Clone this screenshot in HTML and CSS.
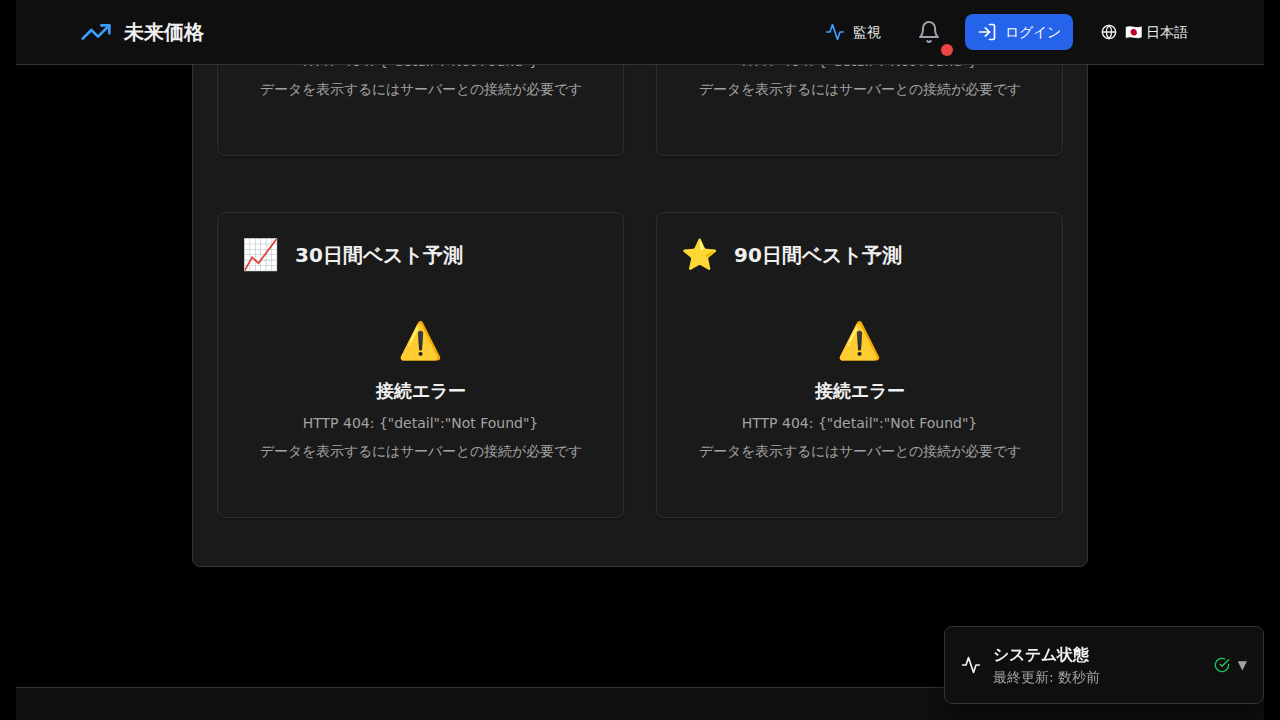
FILE: index.html
```html
<!DOCTYPE html>
<html lang="ja">
<head>
<meta charset="utf-8">
<meta name="viewport" content="width=device-width, initial-scale=1">
<title>未来価格</title>
<link rel="stylesheet" href="styles.css">
</head>
<body>
<header class="site-header">
  <div class="brand">
    <svg class="icon icon-xl accent" viewBox="0 0 24 24" aria-hidden="true"><path d="M22 7l-8.5 8.5-5-5L2 17"/><path d="M16 7h6v6"/></svg>
    <h1 class="brand-name">未来価格</h1>
  </div>
  <nav class="nav">
    <button class="nav-button" type="button">
      <svg class="icon icon-md accent" viewBox="0 0 24 24" aria-hidden="true"><path d="M22 12h-4l-3 9L9 3l-3 9H2"/></svg>
      <span>監視</span>
    </button>
    <button class="bell-button" type="button" aria-label="通知">
      <svg class="icon icon-lg" viewBox="0 0 24 24" aria-hidden="true"><path d="M6 8a6 6 0 0 1 12 0c0 7 3 9 3 9H3s3-2 3-9"/><path d="M10.3 21a1.94 1.94 0 0 0 3.4 0"/></svg>
      <span class="bell-dot"></span>
    </button>
    <button class="nav-button login" type="button">
      <svg class="icon icon-md" viewBox="0 0 24 24" aria-hidden="true"><path d="M15 3h4a2 2 0 0 1 2 2v14a2 2 0 0 1-2 2h-4"/><path d="M10 17l5-5-5-5"/><path d="M15 12H3"/></svg>
      <span>ログイン</span>
    </button>
    <button class="nav-button" type="button">
      <svg class="icon icon-sm" viewBox="0 0 24 24" aria-hidden="true"><circle cx="12" cy="12" r="10"/><path d="M12 2a14.5 14.5 0 0 0 0 20 14.5 14.5 0 0 0 0-20"/><path d="M2 12h20"/></svg>
      <span>🇯🇵 日本語</span>
    </button>
  </nav>
</header>

<main class="content">
  <section class="panel">
    <div class="card-grid">
      <article class="card">
        <div class="error">
          <p class="error-text">HTTP 404: {"detail":"Not Found"}</p>
          <p class="error-text">データを表示するにはサーバーとの接続が必要です</p>
        </div>
      </article>
      <article class="card">
        <div class="error">
          <p class="error-text">HTTP 404: {"detail":"Not Found"}</p>
          <p class="error-text">データを表示するにはサーバーとの接続が必要です</p>
        </div>
      </article>
      <article class="card">
        <div class="card-header"><span class="card-emoji">📈</span><h2 class="card-title">30日間ベスト予測</h2></div>
        <div class="error">
          <div class="error-emoji">⚠️</div>
          <h3 class="error-title">接続エラー</h3>
          <p class="error-text">HTTP 404: {"detail":"Not Found"}</p>
          <p class="error-text">データを表示するにはサーバーとの接続が必要です</p>
        </div>
      </article>
      <article class="card">
        <div class="card-header"><span class="card-emoji">⭐</span><h2 class="card-title">90日間ベスト予測</h2></div>
        <div class="error">
          <div class="error-emoji">⚠️</div>
          <h3 class="error-title">接続エラー</h3>
          <p class="error-text">HTTP 404: {"detail":"Not Found"}</p>
          <p class="error-text">データを表示するにはサーバーとの接続が必要です</p>
        </div>
      </article>
    </div>
  </section>
</main>

<footer class="site-footer"></footer>

<button class="status" type="button">
  <svg class="icon icon-md" viewBox="0 0 24 24" aria-hidden="true"><path d="M22 12h-4l-3 9L9 3l-3 9H2"/></svg>
  <span class="status-body">
    <span class="status-title">システム状態</span>
    <span class="status-time">最終更新: 数秒前</span>
  </span>
  <svg class="icon icon-sm ok" viewBox="0 0 24 24" aria-hidden="true"><path d="M22 11.08V12a10 10 0 1 1-5.93-9.14"/><path d="M9 11l3 3L22 4"/></svg>
  <span class="status-arrow">▼</span>
</button>
</body>
</html>
```
FILE: styles.css
```css
* {
  box-sizing: border-box;
  margin: 0;
}

body {
  display: flex;
  flex-direction: column;
  height: 100vh;
  padding: 0 16px;
  overflow: hidden;
  background: #000;
  color: #f0f0f0;
  font-family: "DejaVu Sans", sans-serif;
  font-size: 14px;
  line-height: 20px;
}

button {
  border: 0;
  background: none;
  color: inherit;
  font: inherit;
  cursor: pointer;
}

.icon {
  flex: none;
  display: block;
  fill: none;
  stroke: currentColor;
  stroke-width: 2;
  stroke-linecap: round;
  stroke-linejoin: round;
}

.icon-sm { width: 16px; height: 16px; }
.icon-md { width: 20px; height: 20px; }
.icon-lg { width: 24px; height: 24px; }
.icon-xl { width: 32px; height: 32px; }
.accent { color: #3b9eff; }
.ok { color: #22c55e; }

.site-header {
  flex: none;
  display: flex;
  align-items: center;
  justify-content: space-between;
  height: 65px;
  padding: 0 64px;
  background: #0f0f0f;
  border-bottom: 1px solid #333;
}

.brand {
  display: flex;
  align-items: center;
  gap: 12px;
}

.brand-name {
  font-size: 20px;
  line-height: 28px;
}

.nav {
  display: flex;
  align-items: center;
  gap: 16px;
}

.nav-button {
  display: flex;
  align-items: center;
  gap: 8px;
  padding: 8px 12px;
  border-radius: 8px;
}

.login {
  background: #2563eb;
  color: #fff;
}

.bell-button {
  position: relative;
  padding: 8px;
  color: #9ca3af;
}

.bell-dot {
  position: absolute;
  right: -4px;
  bottom: -4px;
  width: 12px;
  height: 12px;
  border-radius: 50%;
  background: #ef4444;
}

.content {
  flex: 1;
  min-height: 0;
  display: flex;
  flex-direction: column;
  align-items: center;
  justify-content: flex-end;
  padding-bottom: 120px;
  overflow: hidden;
}

.panel {
  flex: none;
  width: 100%;
  max-width: 896px;
  padding: 24px;
  background: #1a1a1a;
  border: 1px solid #333;
  border-radius: 8px;
}

.card-grid {
  display: grid;
  grid-template-columns: 1fr 1fr;
  grid-auto-rows: 1fr;
  gap: 32px;
}

.card {
  display: flex;
  flex-direction: column;
  justify-content: flex-end;
  margin-bottom: 24px;
  padding: 24px;
  border: 1px solid #2e2e2e;
  border-radius: 8px;
  box-shadow: 0 1px 2px rgba(0, 0, 0, 0.3);
}

.card-header {
  display: flex;
  align-items: center;
  gap: 16px;
  margin-bottom: 16px;
}

.card-emoji {
  font-size: 30px;
  line-height: 36px;
}

.card-title {
  font-size: 20px;
  line-height: 28px;
}

.error {
  padding: 32px 0;
  text-align: center;
}

.error-emoji {
  margin-bottom: 16px;
  font-size: 36px;
  line-height: 40px;
}

.error-title {
  font-size: 18px;
  line-height: 28px;
}

.error-text {
  margin-top: 8px;
  color: #a3a3a3;
}

.site-footer {
  flex: none;
  height: 33px;
  background: #0f0f0f;
  border-top: 1px solid #333;
}

.status {
  position: fixed;
  right: 16px;
  bottom: 16px;
  display: flex;
  align-items: center;
  gap: 8px;
  width: 320px;
  padding: 16px;
  background: #0f0f0f;
  border: 1px solid #333;
  border-radius: 8px;
  box-shadow: 0 10px 15px rgba(0, 0, 0, 0.4);
  text-align: left;
}

.status-body {
  flex: 1;
  display: flex;
  flex-direction: column;
  padding-left: 4px;
}

.status-title {
  font-size: 16px;
  font-weight: 700;
  line-height: 24px;
}

.status-time,
.status-arrow {
  color: #a3a3a3;
}

.status-arrow {
  font-size: 12px;
}
```
